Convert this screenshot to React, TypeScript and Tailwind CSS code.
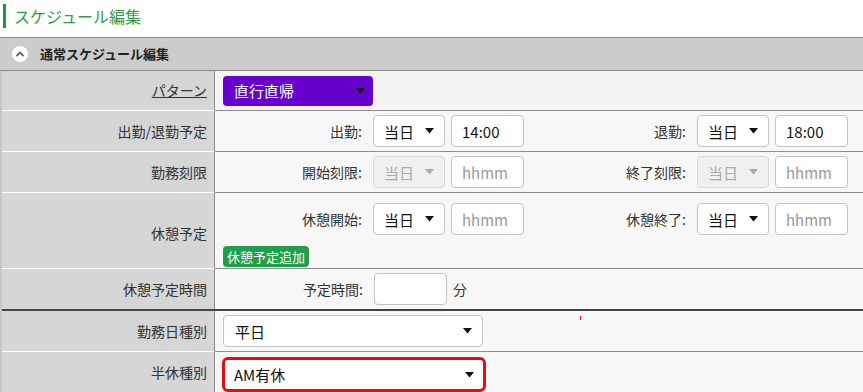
import React from "react";

const font = { fontFamily: '"Noto Sans CJK JP", "Noto Sans", sans-serif' };

const Caret = ({ color = "#111" }: { color?: string }) => (
  <svg width="9" height="6" viewBox="0 0 9 6" className="shrink-0">
    <path d="M0 0 L9 0 L4.5 5.5 Z" fill={color} />
  </svg>
);

const DaySelect = ({ disabled = false }: { disabled?: boolean }) => (
  <div
    className={`flex items-center justify-between w-[72px] h-[32px] pl-[10px] pr-[10px] rounded-[4px] border ${
      disabled ? "border-[#d8d8d8] bg-[#f0f0f0] text-[#aaa]" : "border-[#c4c4c4] bg-white text-[#111]"
    }`}
  >
    <span className="text-[15px] leading-none">当日</span>
    <Caret color={disabled ? "#aaa" : "#111"} />
  </div>
);

const TimeInput = ({ value }: { value?: string }) => (
  <div className="flex items-center w-[73px] h-[32px] px-[10px] rounded-[4px] border border-[#c4c4c4] bg-white">
    {value ? (
      <span className="text-[15px] leading-none text-[#111]">{value}</span>
    ) : (
      <span className="text-[15px] leading-none text-[#999]">hhmm</span>
    )}
  </div>
);

const Pair = ({ label, disabled, value }: { label: string; disabled?: boolean; value?: string }) => (
  <div className="flex-1 flex items-center justify-end pr-[15px]">
    <span className="text-[14px] text-[#333] mr-[11px]">{label}</span>
    <DaySelect disabled={disabled} />
    <div className="w-[6px]" />
    <TimeInput value={value} />
  </div>
);

const Label = ({ children, className = "" }: { children: React.ReactNode; className?: string }) => (
  <div
    className={`w-[213px] shrink-0 bg-[#d5d6d5] flex items-center justify-end pr-[7px] text-[14px] text-[#333] border-r border-[#8c8c8c] ${className}`}
  >
    {children}
  </div>
);

export default function App() {
  return (
    <div className="w-[863px] h-[392px] bg-white overflow-hidden" style={font}>
      <div className="h-[37px] flex items-start pt-[4px] pl-[3px]">
        <div className="w-[3px] h-[24px] bg-[#1a9a45]" />
        <span className="ml-[8px] text-[16px] leading-[24px] text-[#2f9a4a]">スケジュール編集</span>
      </div>

      <div className="h-[34px] bg-[#cccccc] border-y border-[#8a8a8a] flex items-center pl-[12px]">
        <div className="w-[16px] h-[16px] rounded-full bg-white flex items-center justify-center">
          <svg width="10" height="10" viewBox="0 0 10 10">
            <path d="M2 6.5 L5 3.5 L8 6.5" stroke="#666" strokeWidth="1.8" fill="none" strokeLinecap="round" />
          </svg>
        </div>
        <span className="ml-[12px] text-[13px] font-bold text-[#222]">通常スケジュール編集</span>
      </div>

      <div className="border-l-[2px] border-[#c8c8c8]">
        {/* パターン */}
        <div className="flex h-[40px]">
          <Label className="border-b border-b-white">
            <span className="underline">パターン</span>
          </Label>
          <div className="flex-1 bg-[#f4f4f4] border-b border-[#8e8e8e] flex items-center pl-[8px]">
            <div className="w-[150px] h-[30px] rounded-[4px] bg-[#6600cc] flex items-center justify-between pl-[11px] pr-[8px]">
              <span className="text-[15px] text-white leading-none">直行直帰</span>
              <Caret color="#111" />
            </div>
          </div>
        </div>

        {/* 出勤/退勤予定 */}
        <div className="flex h-[41px]">
          <Label className="border-b border-b-white">出勤/退勤予定</Label>
          <div className="flex-1 bg-[#f7f7f7] border-b border-[#8e8e8e] flex items-center">
            <Pair label="出勤:" value="14:00" />
            <Pair label="退勤:" value="18:00" />
          </div>
        </div>

        {/* 勤務刻限 */}
        <div className="flex h-[41px]">
          <Label className="border-b border-b-white">勤務刻限</Label>
          <div className="flex-1 bg-[#f7f7f7] border-b border-[#8e8e8e] flex items-center">
            <Pair label="開始刻限:" disabled />
            <Pair label="終了刻限:" disabled />
          </div>
        </div>

        {/* 休憩予定 */}
        <div className="flex h-[76px]">
          <Label className="border-b border-b-white pt-[6px]">休憩予定</Label>
          <div className="flex-1 bg-[#f7f7f7] border-b border-[#8e8e8e] flex flex-col pt-[10px]">
            <div className="flex items-center">
              <Pair label="休憩開始:" />
              <Pair label="休憩終了:" />
            </div>
            <div className="pl-[8px] mt-[8px]">
              <span className="inline-flex items-center h-[21px] px-[4px] rounded-[4px] bg-[#21a04c] text-white text-[13px] leading-none">
                休憩予定追加
              </span>
            </div>
          </div>
        </div>

        {/* 休憩予定時間 */}
        <div className="flex h-[40px]">
          <Label>休憩予定時間</Label>
          <div className="flex-1 bg-[#f7f7f7] flex items-center">
            <div className="w-[324px] flex items-center justify-end pr-[92px]">
              <span className="text-[14px] text-[#333] mr-[11px]">予定時間:</span>
              <div className="w-[73px] h-[32px] rounded-[4px] border border-[#c4c4c4] bg-white" />
            </div>
            <span className="-ml-[86px] text-[14px] text-[#333]">分</span>
          </div>
        </div>

        <div className="h-[2px] bg-[#444]" />

        {/* 勤務日種別 */}
        <div className="flex h-[41px]">
          <Label className="border-b border-b-white">勤務日種別</Label>
          <div className="relative flex-1 bg-[#f7f7f7] border-b border-[#8e8e8e] flex items-center pl-[8px]">
            <div className="w-[260px] h-[32px] rounded-[4px] border border-[#c4c4c4] bg-white flex items-center justify-between pl-[11px] pr-[10px]">
              <span className="text-[15px] text-[#111] leading-none">平日</span>
              <Caret />
            </div>
            <span className="absolute left-[365px] top-[5px] w-[1px] h-[4px] bg-[#ff0000]" />
          </div>
        </div>

        {/* 半休種別 */}
        <div className="flex h-[40px]">
          <Label>半休種別</Label>
          <div className="flex-1 bg-[#f7f7f7] flex items-start pl-[7px] pt-[5px]">
            <div className="w-[264px] h-[35px] rounded-[6px] border-[3px] border-[#e01010] bg-white flex items-center justify-between pl-[9px] pr-[9px]">
              <span className="text-[15px] text-[#111] leading-none">AM有休</span>
              <Caret />
            </div>
          </div>
        </div>
      </div>
    </div>
  );
}
